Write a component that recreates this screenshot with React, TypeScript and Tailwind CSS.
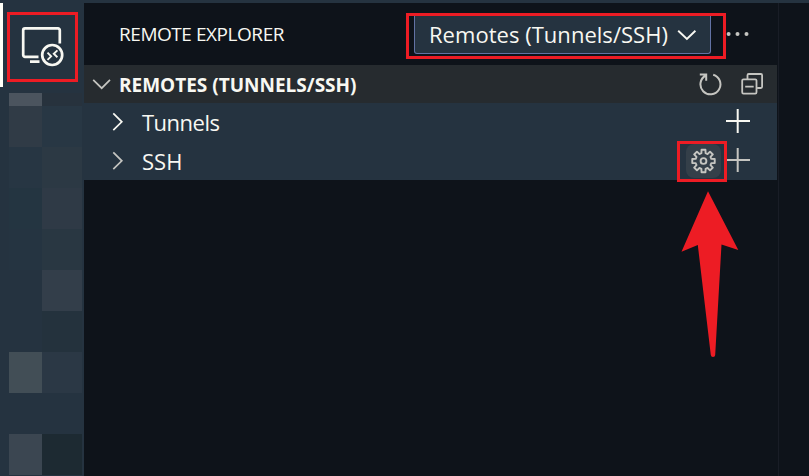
import type { ReactNode } from 'react';

const mosaic: [string, string, string][] = [
  ['h-[13px]', 'bg-[#4b545e]', 'bg-[#27323d]'],
  ['h-[41px]', 'bg-[#303b46]', 'bg-[#283744]'],
  ['h-[41px]', 'bg-[#273643]', 'bg-[#2c3944]'],
  ['h-[41px]', 'bg-[#243541]', 'bg-[#2f3a46]'],
  ['h-[41px]', 'bg-[#253441]', 'bg-[#293742]'],
  ['h-[41px]', 'bg-[#253340]', 'bg-[#333e4a]'],
  ['h-[41px]', 'bg-[#253340]', 'bg-[#24323d]'],
  ['h-[41px]', 'bg-[#424e56]', 'bg-[#2b3845]'],
  ['h-[41px]', 'bg-[#253340]', 'bg-[#253340]'],
  ['h-[41px]', 'bg-[#3b4651]', 'bg-[#1d2a32]'],
];

function ActivityBar() {
  return (
    <aside className="flex w-[84px] shrink-0 flex-col bg-[#253340]">
      <div className="h-[84px] border-l-[3px] border-[#fffff8] pt-[9px] pl-[4px]">
        <div className="h-[70px] w-[71px] border-[3px] border-[#ed1c24]">
          <svg className="block h-[64px] w-[65px]" viewBox="10 15 65 64" fill="none" stroke="#f8f8f2">
            <path d="M38.5 56.8H25a1.8 1.8 0 0 1-1.8-1.8V30.2a1.8 1.8 0 0 1 1.8-1.8H58a1.8 1.8 0 0 1 1.8 1.8V43.5M30 61.7h9.5" strokeWidth="2.7" />
            <circle cx="52.2" cy="55" r="10" strokeWidth="2.7" />
            <path d="M47.5 52.7l3.6 3.6-3.6 3.6M57.4 50.4l-3.6 3.4 3.6 3.4" strokeWidth="1.9" />
          </svg>
        </div>
      </div>
      <div className="mt-[6px] ml-[9px] w-[73px]">
        {mosaic.map(([height, left, right], i) => (
          <div key={i} className={`flex ${height}`}>
            <div className={`w-[33px] ${left}`} />
            <div className={`w-[40px] ${right}`} />
          </div>
        ))}
      </div>
    </aside>
  );
}

function Plus({ color }: { color: string }) {
  return (
    <svg className="block h-[24px] w-[24px]" viewBox="0 0 24 24" fill="none" stroke={color} strokeWidth="2">
      <path d="M0 12H24M11.7 0V24" />
    </svg>
  );
}

function TreeRow({ label, color, tracking, children }: { label: string; color: string; tracking: string; children: ReactNode }) {
  return (
    <div className="flex h-[38.5px] items-center pr-[27px] pl-[28px]">
      <svg className="block h-[20px] w-[12px]" viewBox="0 0 12 20" fill="none" stroke={color} strokeWidth="1.7">
        <path d="M1.3 1.4L9.8 9.8L1.3 18.2" />
      </svg>
      <span className={`ml-[18px] text-[22px] leading-[38px] whitespace-nowrap text-[#f8f8f2] ${tracking}`}>{label}</span>
      <div className="mb-[2px] ml-auto flex items-center">{children}</div>
    </div>
  );
}

const gearTeeth = Array.from({ length: 8 }, (_, i) => {
  const at = (radius: number, degrees: number) => {
    const a = ((i * 45 + degrees) * Math.PI) / 180;
    return `${(radius * Math.sin(a)).toFixed(2)} ${(-radius * Math.cos(a)).toFixed(2)}`;
  };
  return `${i === 0 ? 'M' : 'L'}${at(8.1, -15)}L${at(11.4, -10)}L${at(11.4, 10)}L${at(8.1, 15)}L${at(8, 22.5)}`;
}).join('') + 'Z';

export default function App() {
  return (
    <div className="relative flex h-[476px] w-[809px] flex-col overflow-hidden bg-[#0e131a] font-['Open_Sans','Noto_Sans',sans-serif] text-[#f8f8f2]">
      <div className="h-[3px] shrink-0 bg-[#253340]" />
      <div className="flex min-h-0 flex-1">
        <ActivityBar />
        <main className="w-[693px] shrink-0">
          <header className="flex h-[62px] items-start pl-[35px]">
            <h1 className="mt-[16px] w-[287px] text-[19px] leading-[30px] tracking-[-0.45px] whitespace-nowrap">REMOTE EXPLORER</h1>
            <div className="mt-[10px] h-[46px] w-[320px] border-[3px] border-[#ed1c24]">
              <button className="ml-[5px] flex h-[38px] w-[297px] items-center rounded-b-[3px] border border-t-0 border-[#6272a4] bg-[#253340] pl-[14px] text-left">
                <span className="w-[248px] pb-[2px] text-[22px] leading-[34px] tracking-[0.03px] whitespace-nowrap">Remotes (Tunnels/SSH)</span>
                <svg className="block h-[12px] w-[20px]" viewBox="0 0 20 12" fill="none" stroke="#f8f8f2" strokeWidth="1.9">
                  <path d="M1.2 1.7L9.9 10L18.4 1.7" />
                </svg>
              </button>
            </div>
            <svg className="mt-[28px] block h-[6px] w-[24px]" viewBox="0 0 24 6" fill="#c5c5c1">
              <circle cx="2.6" cy="3" r="2" />
              <circle cx="11.5" cy="3" r="2" />
              <circle cx="20.5" cy="3" r="2" />
            </svg>
          </header>

          <div className="flex h-[38px] w-[693px] items-center bg-[#262b2f] pr-[12px] pl-[8px]">
            <svg className="block h-[12px] w-[20px]" viewBox="0 0 20 12" fill="none" stroke="#c5c5c1" strokeWidth="1.7">
              <path d="M1.2 1.8L9.7 10.2L18 1.8" />
            </svg>
            <h2 className="ml-[7px] pt-[2px] text-[19px] leading-[36px] font-bold tracking-[0px] whitespace-nowrap">REMOTES (TUNNELS/SSH)</h2>
            <svg className="ml-auto block h-[24px] w-[24px]" viewBox="699 72 24 24" fill="none" stroke="#c5c5c1" strokeWidth="2">
              <path d="M713.2 74.7A10 10 0 1 1 705.7 75.5M699.8 74.4H706.2V80.8" />
            </svg>
            <svg className="ml-[18px] block h-[24px] w-[24px]" viewBox="741 72 24 24" fill="none" stroke="#c5c5c1" strokeWidth="1.8">
              <path d="M747.5 79V75.2Q747.5 74 748.7 74H760.9Q762.1 74 762.1 75.2V86.8Q762.1 88 760.9 88H757.1M745.2 86.6H753.7" />
              <rect x="742.2" y="79.3" width="14.3" height="14.3" rx="1.3" />
            </svg>
          </div>

          <div className="h-[77px] bg-[#253340]">
            <TreeRow label="Tunnels" color="#f8f8f2" tracking="tracking-[-0.5px]">
              <Plus color="#f8f8f2" />
            </TreeRow>
            <TreeRow label="SSH" color="#c5c5c1" tracking="tracking-[0px]">
              <div className="mt-[2px] flex h-[34px] w-[35px] items-center justify-center rounded-[8px] bg-[#343f49]">
                <svg className="block h-[26px] w-[26px]" viewBox="-12.5 -13 26 26" fill="none" stroke="#c5c5c1" strokeWidth="1.9" strokeLinejoin="round">
                  <path d={gearTeeth} />
                  <circle r="2.9" strokeWidth="1.9" />
                </svg>
              </div>
              <div className="ml-[5px]">
                <Plus color="#c5c5c1" />
              </div>
            </TreeRow>
          </div>
        </main>
        <div className="ml-px w-px bg-[#191d26]" />
      </div>

      <div className="absolute top-[141px] left-[677px] h-[41px] w-[50px] border-[3px] border-[#ed1c24]" />
      <svg className="absolute top-[190px] left-[680px] h-[170px] w-[60px]" viewBox="680 190 60 170" fill="#ed1c24">
        <path d="M708 191.3L738.3 250L721.5 244.5L715.2 355Q715.1 357 713 357Q711 357 710.8 355L697.8 245L681.5 251.8Z" />
      </svg>
    </div>
  );
}
